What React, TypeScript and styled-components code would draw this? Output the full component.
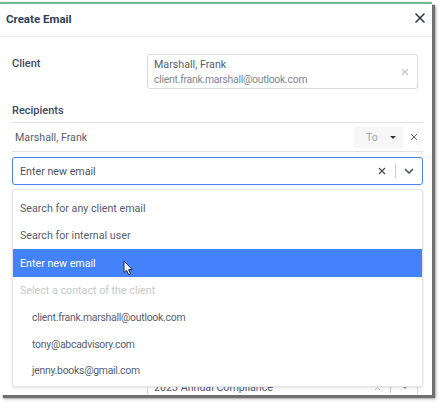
import { createGlobalStyle } from 'styled-components';
import styled from 'styled-components';

const GlobalStyle = createGlobalStyle`
    html, body {
        margin: 0;
        padding: 0;
        background: #fff;
        font-family: Roboto, 'Noto Sans', sans-serif;
    }
`;

const Page = styled.div`
    width: 444px;
    height: 407px;
    padding: 2px 12px 12px 0;
    box-sizing: border-box;
    overflow: hidden;
`;

const Modal = styled.div`
    height: 391px;
    background: #fff;
    border-top: 2px solid #6dbb8e;
    box-shadow: 3px 3px 1px #707070, 4px 4px 3px #b5b5b5, 0 0 2px #ddd;
    overflow: hidden;
`;

const Header = styled.div`
    display: flex;
    align-items: center;
    justify-content: space-between;
    height: 32px;
    padding: 0 6px 0 6px;
    border-bottom: 1px solid #eee;
    box-sizing: content-box;

    svg {
        margin-bottom: 4px;
    }
`;

const Title = styled.div`
    font-size: 11.5px;
    font-weight: 700;
    color: #2f3f58;
    margin-bottom: 3px;
`;

const Body = styled.div`
    padding: 17px 9px 0 12px;
`;

const ClientRow = styled.div`
    display: grid;
    grid-template-columns: 135px 1fr;
    padding-right: 5px;
`;

const FieldLabel = styled.div`
    font-size: 11px;
    font-weight: 500;
    color: #3d4a5f;
    padding-top: 2px;
    line-height: 15px;
`;

const ClientBox = styled.div`
    display: flex;
    align-items: center;
    justify-content: space-between;
    height: 35px;
    padding: 0 8px 0 6px;
    border: 1px solid #dcdcdc;
    border-radius: 3px;
    box-sizing: border-box;
`;

const ClientText = styled.div`
    display: flex;
    flex-direction: column;
`;

const ClientName = styled.div`
    font-size: 10.7px;
    line-height: 15px;
    color: #56606f;
`;

const ClientEmail = styled.div`
    font-size: 10.4px;
    letter-spacing: -0.25px;
    line-height: 15px;
    color: #7d8691;
`;

const SectionLabel = styled(FieldLabel)`
    margin-top: 14px;
    padding: 0 0 4px;
`;

const RecipientRow = styled.div`
    display: flex;
    align-items: center;
    height: 30px;
    padding: 0 5px 0 3px;
    border-top: 1px solid #e2e2e2;
    border-bottom: 1px solid #e2e2e2;
    box-sizing: border-box;
`;

const RecipientName = styled.div`
    flex: 1;
    font-size: 10.7px;
    color: #56606f;
`;

const TypeSelect = styled.div`
    display: flex;
    align-items: center;
    justify-content: space-between;
    width: 49px;
    height: 21px;
    padding: 0 7px 0 12px;
    margin-right: 7px;
    background: #f6f6f6;
    font-size: 10.5px;
    color: #a5a9ae;
    box-sizing: border-box;
`;

const Caret = styled.span<{ $color: string }>`
    width: 0;
    height: 0;
    border-left: 3px solid transparent;
    border-right: 3px solid transparent;
    border-top: 3px solid ${props => props.$color};
`;

const SelectWrap = styled.div`
    position: relative;
    margin-top: 5px;
`;

const SelectControl = styled.div`
    display: flex;
    align-items: center;
    height: 28px;
    padding: 0 8px 0 7px;
    border: 1px solid #4a82f0;
    border-radius: 3px;
    box-sizing: border-box;
    font-size: 10.7px;
    color: #4b5563;
`;

const SelectValue = styled.div`
    flex: 1;
`;

const SelectSep = styled.span`
    width: 1px;
    height: 14px;
    margin: 0 8px 0 9px;
    background: #ccc;
`;

const Menu = styled.div`
    position: absolute;
    z-index: 5;
    top: 32px;
    left: 0;
    right: 0;
    height: 198px;
    padding-top: 4px;
    background: #fff;
    border: 1px solid #e6e6e6;
    border-radius: 3px;
    box-shadow: 0 1px 3px rgb(0 0 0 / 12%);
    box-sizing: border-box;
`;

const Option = styled.div<{ $active?: boolean }>`
    display: flex;
    align-items: center;
    height: 27.5px;
    padding: 1px 0 0 7px;
    font-size: 10.7px;
    background: ${props => (props.$active ? '#4482fb' : 'transparent')};
    color: ${props => (props.$active ? '#fff' : '#56606f')};
    box-sizing: border-box;
`;

const GroupHeading = styled(Option)`
    color: #c6c8cb;
`;

const ContactOption = styled(Option)`
    height: 26.5px;
    padding-left: 19px;
    font-size: 10.4px;
    letter-spacing: -0.25px;
`;

const Cursor = styled.svg`
    position: absolute;
    left: 110px;
    top: 70px;
`;

const ComplianceRow = styled.div`
    display: grid;
    grid-template-columns: 135px 1fr;
    margin-top: 187px;
    padding-right: 5px;
`;

const ComplianceBox = styled.div`
    display: flex;
    align-items: center;
    height: 30px;
    padding: 0 9px 0 6px;
    border: 1px solid #dcdcdc;
    font-size: 10.7px;
    color: #56606f;
    box-sizing: border-box;
`;

const ComplianceName = styled.div`
    flex: 1;
`;

const ComplianceSep = styled.span`
    width: 1px;
    height: 12px;
    margin: 0 11px 0 9px;
    background: #ccc;
`;

function CloseIcon({ size, stroke, width }: { size: number; stroke: string; width: number }) {
    return (
        <svg width={size} height={size} viewBox="0 0 12 12">
            <path d="M1.5 1.5 10.5 10.5M10.5 1.5 1.5 10.5" stroke={stroke} strokeWidth={width} fill="none" />
        </svg>
    );
}

export default function App() {
    return (
        <Page>
            <GlobalStyle />
            <Modal>
                <Header>
                    <Title>Create Email</Title>
                    <CloseIcon size={12} stroke="#2b3444" width={1.5} />
                </Header>
                <Body>
                    <ClientRow>
                        <FieldLabel>Client</FieldLabel>
                        <ClientBox>
                            <ClientText>
                                <ClientName>Marshall, Frank</ClientName>
                                <ClientEmail>client.frank.marshall@outlook.com</ClientEmail>
                            </ClientText>
                            <CloseIcon size={8} stroke="#c4c8cc" width={1.8} />
                        </ClientBox>
                    </ClientRow>
                    <SectionLabel>Recipients</SectionLabel>
                    <RecipientRow>
                        <RecipientName>Marshall, Frank</RecipientName>
                        <TypeSelect>
                            To
                            <Caret $color="#333" />
                        </TypeSelect>
                        <CloseIcon size={8} stroke="#4a5a70" width={1.4} />
                    </RecipientRow>
                    <SelectWrap>
                        <SelectControl>
                            <SelectValue>Enter new email</SelectValue>
                            <CloseIcon size={8} stroke="#4a5058" width={2} />
                            <SelectSep />
                            <svg width="10" height="6" viewBox="0 0 10 6">
                                <path d="M1 1 5 5 9 1" stroke="#4a5058" strokeWidth="1.5" fill="none" />
                            </svg>
                        </SelectControl>
                        <Menu>
                            <Option>Search for any client email</Option>
                            <Option>Search for internal user</Option>
                            <Option $active>Enter new email</Option>
                            <GroupHeading>Select a contact of the client</GroupHeading>
                            <ContactOption>client.frank.marshall@outlook.com</ContactOption>
                            <ContactOption>tony@abcadvisory.com</ContactOption>
                            <ContactOption>jenny.books@gmail.com</ContactOption>
                            <Cursor width="11" height="16" viewBox="0 0 11 16">
                                <path d="M1 1V12.5L3.6 10.2 5.6 14.8 7.6 13.9 5.6 9.6H9.2Z" fill="#fff" stroke="#1d2a44" strokeWidth="1" />
                            </Cursor>
                        </Menu>
                    </SelectWrap>
                    <ComplianceRow>
                        <span />
                        <ComplianceBox>
                            <ComplianceName>2023 Annual Compliance</ComplianceName>
                            <CloseIcon size={7} stroke="#b5b9be" width={1.6} />
                            <ComplianceSep />
                            <Caret $color="#999" />
                        </ComplianceBox>
                    </ComplianceRow>
                </Body>
            </Modal>
        </Page>
    );
}
